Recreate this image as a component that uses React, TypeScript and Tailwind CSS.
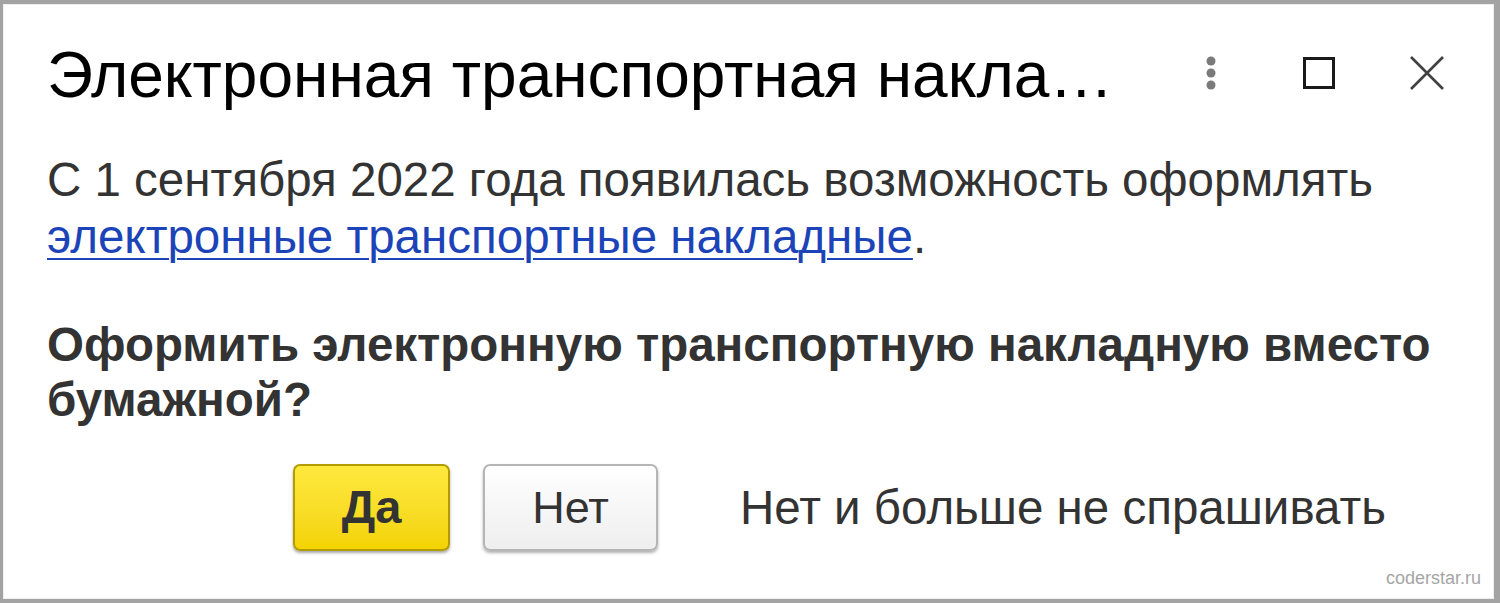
import { } from 'react'

function DotsIcon() {
  return (
    <svg width="12" height="34" viewBox="0 0 12 34">
      <circle cx="6" cy="5" r="4.5" fill="#7a7a7a" />
      <circle cx="6" cy="17" r="4.5" fill="#7a7a7a" />
      <circle cx="6" cy="29" r="4.5" fill="#7a7a7a" />
    </svg>
  )
}

function MaximizeIcon() {
  return (
    <svg width="32" height="32" viewBox="0 0 32 32">
      <rect x="1.5" y="1.5" width="29" height="29" fill="none" stroke="#1a1a1a" strokeWidth="3" />
    </svg>
  )
}

function CloseIcon() {
  return (
    <svg width="36" height="36" viewBox="0 0 36 36">
      <path d="M2 2 L34 34 M34 2 L2 34" stroke="#404040" strokeWidth="2.6" />
    </svg>
  )
}

export default function App() {
  return (
    <div className="w-[1500px] h-[603px] bg-white border-[#a3a3a3] border-t-[4px] border-l-[3px] border-r-[6px] border-b-[4px] font-['Liberation_Sans',Arial,sans-serif]">
      <div className="h-full flex flex-col border border-[#efefef]">
        <div className="flex items-center pt-[38px] mb-[44px] pl-[43px] pr-[46px]">
          <h1 className="flex-1 min-w-0 text-[64px] leading-[64px] text-black whitespace-nowrap">
            Электронная транспортная накла…
          </h1>
          <div className="flex items-center -mt-[4px]">
            <button className="ml-[4px] w-[60px] flex justify-center"><DotsIcon /></button>
            <button className="ml-[58px] w-[40px] flex justify-center"><MaximizeIcon /></button>
            <button className="ml-[68px] w-[40px] flex justify-center"><CloseIcon /></button>
          </div>
        </div>

        <div className="pl-[43px] text-[47.5px] leading-[57px] text-[#333]">
          <p>С 1 сентября 2022 года появилась возможность оформлять</p>
          <p>
            <a className="text-[#1c44b8] underline decoration-[2px] underline-offset-[5px]">электронные транспортные накладные</a>.
          </p>
        </div>

        <p className="pl-[43px] pr-[40px] mt-[52px] text-[47.5px] leading-[55px] font-bold text-[#333]">
          Оформить электронную транспортную накладную вместо бумажной?
        </p>

        <div className="flex items-center mt-[37px] pl-[289px]">
          <button className="w-[157px] h-[87px] rounded-[7px] border-2 border-[#b39c00] bg-gradient-to-b from-[#ffe93d] to-[#f3d300] shadow-[0_2px_3px_rgba(0,0,0,0.35)] text-[47px] font-bold text-[#333]">
            Да
          </button>
          <button className="ml-[33px] w-[175px] h-[87px] rounded-[7px] border-2 border-[#b5b5b5] bg-gradient-to-b from-white to-[#eeeeee] shadow-[0_2px_3px_rgba(0,0,0,0.3)] text-[45px] text-[#333]">
            Нет
          </button>
          <button className="ml-[82px] text-[47.5px] text-[#333]">
            Нет и больше не спрашивать
          </button>
        </div>

        <div className="flex-1 flex items-end justify-end pr-[12px] pb-[6px]">
          <span className="text-[18px] text-[#a5a5a5]">coderstar.ru</span>
        </div>
      </div>
    </div>
  )
}
